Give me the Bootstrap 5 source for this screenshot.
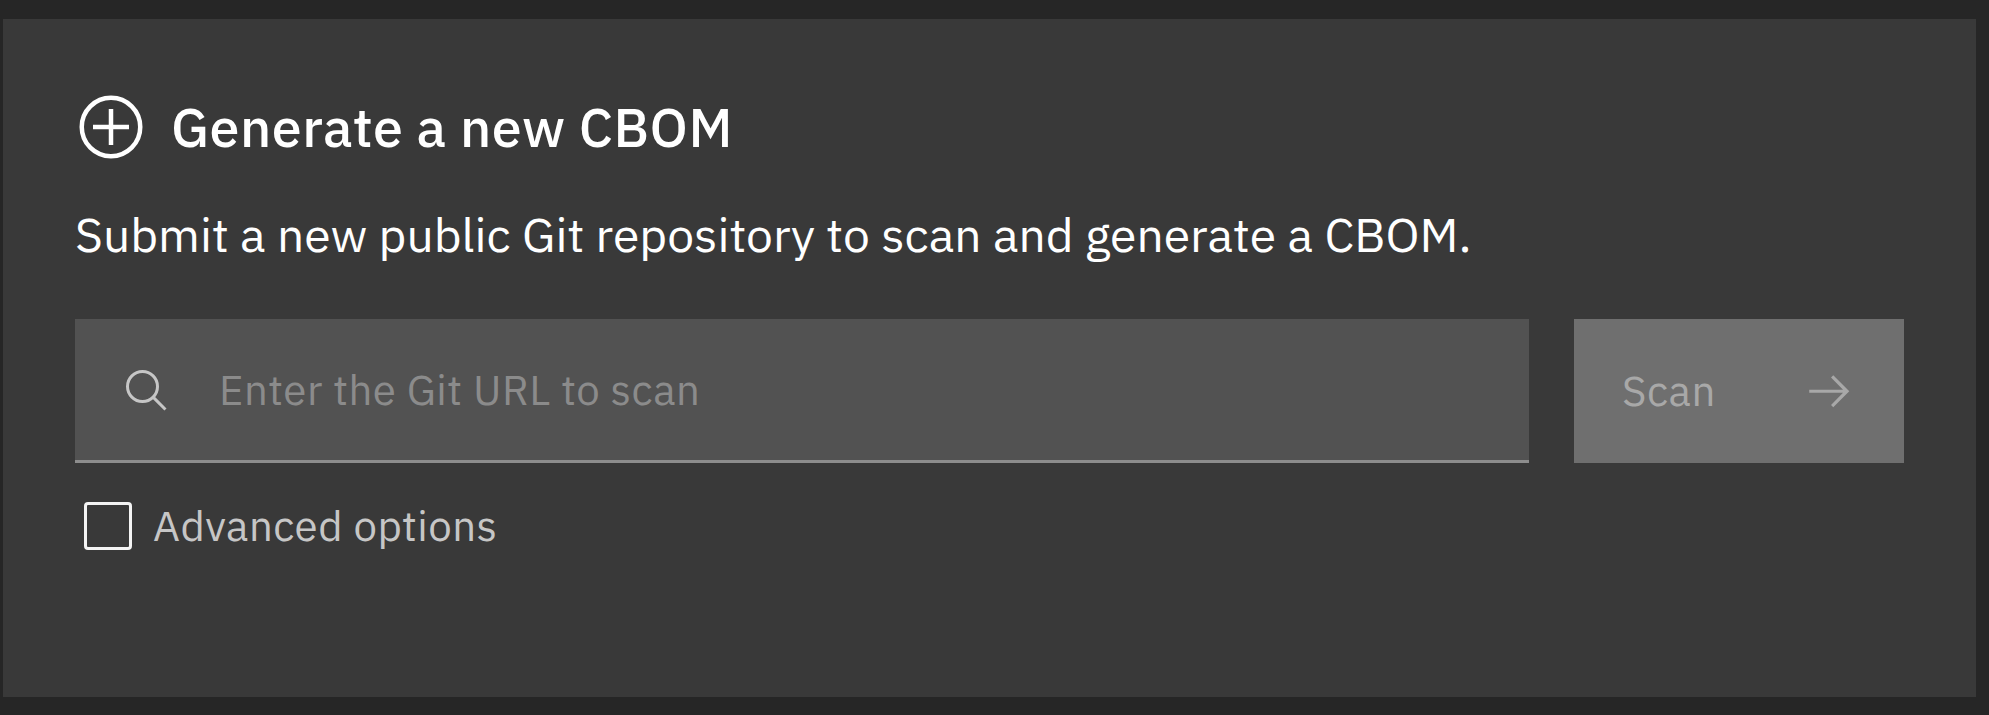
<!DOCTYPE html>
<html lang="en">
<head>
<meta charset="utf-8">
<meta name="viewport" content="width=device-width, initial-scale=1">
<title>Generate a new CBOM</title>
<link rel="stylesheet" href="https://cdn.jsdelivr.net/npm/bootstrap@5.3.0/dist/css/bootstrap.min.css">
<style>
  body { background: #262626; font-family: "IBM Plex Sans", Roboto, sans-serif; padding: 19px 13px 18px 3px; }
  .panel { background: #393939; color: #fff; padding: 72px; height: 678px; }
  .panel-title { font-size: 54px; line-height: 72px; font-weight: 500; letter-spacing: .48px; margin-left: 24px; }
  .panel-text { font-size: 48px; line-height: 72px; margin: 35px 0 49px; letter-spacing: 0; white-space: nowrap; }
  .scan-row { gap: 45px; height: 144px; }
  .url-field { background: #525252; border-bottom: 3px solid #8d8d8d; padding: 3px 0 0 48px; }
  .url-field .form-control { font-size: 42px; letter-spacing: .48px; padding: 0 0 3px 48px; line-height: 54px; color: #f4f4f4; }
  .url-field .form-control::placeholder { color: #8b8b8b; opacity: 1; }
  .btn-scan { width: 330px; font-size: 42px; line-height: 54px; letter-spacing: .48px; padding: 0 53px 0 48px; --bs-btn-disabled-bg: #6f6f6f; --bs-btn-disabled-color: #a8a8a8; --bs-btn-disabled-opacity: 1; --bs-btn-border-width: 0; }
  .advanced { margin: 36px 0 0 9px; gap: 21px; }
  .advanced .form-check-input { width: 48px; height: 48px; border: 3px solid #f4f4f4; border-radius: 4px; background-color: transparent; }
  .advanced .form-check-label { font-size: 42px; line-height: 54px; letter-spacing: .48px; color: #c6c6c6; }
</style>
</head>
<body>
<main class="panel">
  <div class="d-flex align-items-center">
    <svg class="flex-shrink-0" width="72" height="72" viewBox="0 0 32 32" fill="none" stroke="#fff" stroke-width="2" aria-hidden="true"><circle cx="16" cy="16" r="13"/><path d="M16 8v16M8 16h16"/></svg>
    <h1 class="panel-title mb-0">Generate a new CBOM</h1>
  </div>
  <p class="panel-text">Submit a new public Git repository to scan and generate a CBOM.</p>
  <form class="scan-row d-flex">
    <div class="url-field d-flex align-items-center flex-grow-1">
      <svg class="flex-shrink-0" width="48" height="48" viewBox="0 0 32 32" fill="none" stroke="#c6c6c6" stroke-width="2" aria-hidden="true"><circle cx="13" cy="13" r="10"/><path d="M20.4 20.4l7.9 7.9"/></svg>
      <input class="form-control border-0 rounded-0 bg-transparent" type="text" placeholder="Enter the Git URL to scan" aria-label="Git URL">
    </div>
    <button class="btn btn-secondary btn-scan rounded-0 d-flex align-items-center justify-content-between" type="submit" disabled>
      <span>Scan</span>
      <svg width="44.5" height="44.5" viewBox="0 0 20 20" fill="currentColor" aria-hidden="true"><path d="M11.8 2.8l-1 1 5.4 5.5H1v1.4h15.2l-5.4 5.5 1 1L19 10z"/></svg>
    </button>
  </form>
  <div class="advanced d-flex align-items-center">
    <input class="form-check-input m-0 flex-shrink-0" type="checkbox" id="advanced">
    <label class="form-check-label" for="advanced">Advanced options</label>
  </div>
</main>
<script src="https://cdn.jsdelivr.net/npm/bootstrap@5.3.0/dist/js/bootstrap.bundle.min.js"></script>
</body>
</html>
